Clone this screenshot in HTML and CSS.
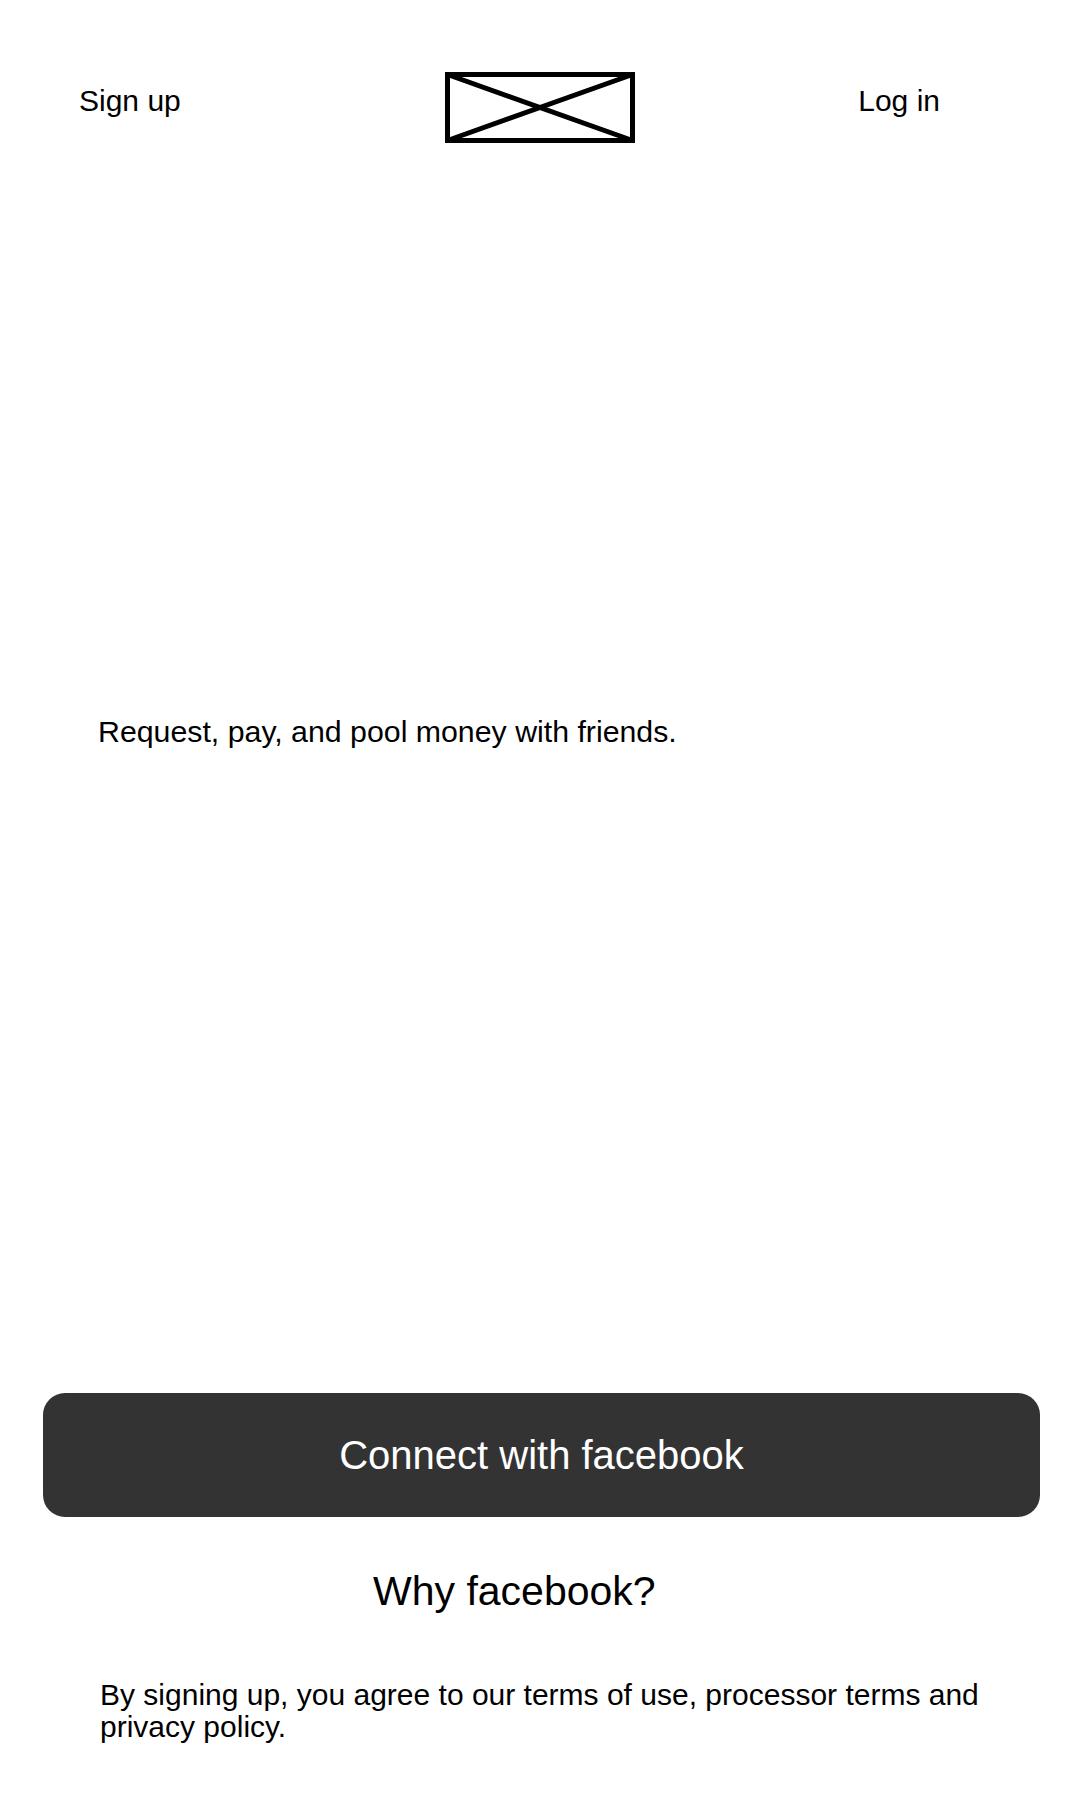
FILE: index.html
```html
<!DOCTYPE html>
<html lang="en">
<head>
<meta charset="utf-8">
<title>Sign up</title>
<link rel="stylesheet" href="styles.css">
</head>
<body>
<div class="page">
  <header class="topbar">
    <a class="nav-link nav-left">Sign up</a>
    <div class="logo">
      <svg width="190" height="71" viewBox="0 0 190 71">
        <rect x="2.5" y="2.5" width="185" height="66" fill="none" stroke="#000" stroke-width="5"/>
        <line x1="2.5" y1="2.5" x2="187.5" y2="68.5" stroke="#000" stroke-width="5"/>
        <line x1="187.5" y1="2.5" x2="2.5" y2="68.5" stroke="#000" stroke-width="5"/>
      </svg>
    </div>
    <a class="nav-link nav-right">Log in</a>
  </header>

  <p class="tagline">Request, pay, and pool money with friends.</p>

  <div class="actions">
    <button class="fb-button">Connect with facebook</button>
    <p class="why">Why facebook?</p>
    <p class="legal">By signing up, you agree to our terms of use, processor terms and privacy policy.</p>
  </div>
</div>
</body>
</html>
```

FILE: styles.css
```css
html, body {
  margin: 0;
  padding: 0;
  background: #ffffff;
}

body {
  font-family: "Liberation Sans", Arial, sans-serif;
  color: #000;
  width: 1080px;
  height: 1800px;
}

.page {
  display: flex;
  flex-direction: column;
}

.topbar {
  display: grid;
  grid-template-columns: 1fr auto 1fr;
  align-items: start;
  padding-top: 72px;
}

.nav-link {
  font-size: 30px;
  line-height: 34px;
  margin-top: 12px;
  color: #000;
}

.nav-left {
  justify-self: start;
  padding-left: 79px;
}

.nav-right {
  justify-self: end;
  padding-right: 140px;
}

.logo {
  width: 190px;
  height: 71px;
}

.logo svg {
  display: block;
}

.tagline {
  margin: 572px 0 0 0;
  padding-left: 98px;
  font-size: 30.3px;
  line-height: 34px;
}

.actions {
  display: flex;
  flex-direction: column;
  margin-top: 644px;
}

.fb-button {
  margin: 0 40px 0 43px;
  height: 124px;
  border: none;
  border-radius: 22px;
  background: #333333;
  color: #ffffff;
  font-family: "Liberation Sans", Arial, sans-serif;
  font-size: 40px;
  padding: 0;
}

.why {
  margin: 51px 0 0 0;
  padding-left: 373px;
  font-size: 41px;
  line-height: 46px;
}

.legal {
  margin: 65px 0 0 0;
  padding: 0 80px 0 100px;
  font-size: 30px;
  line-height: 32px;
}
```
